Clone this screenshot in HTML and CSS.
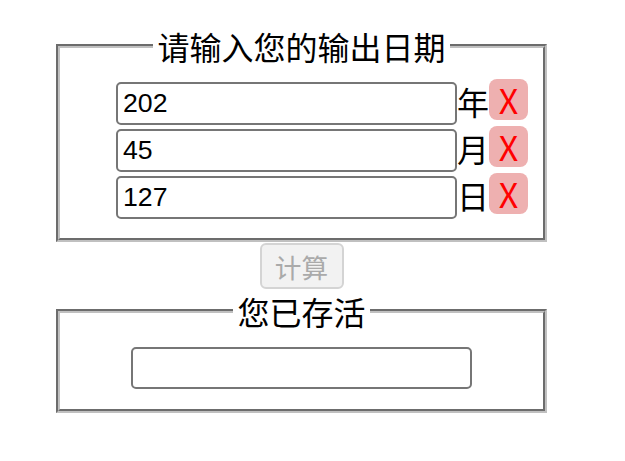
FILE: index.html
```html
<!DOCTYPE html>
<html lang="zh-CN">
<head>
  <meta charset="UTF-8">
  <title>日期计算</title>
  <link rel="stylesheet" href="styles.css">
</head>
<body>

<div class="page">
  <!-- 输入日期 -->
  <fieldset class="box date-box">
    <legend>请输入您的输出日期</legend>
    <div class="row">
      <input type="text" class="field" id="year" value="202">
      <span class="unit">年</span>
      <button class="clear-btn" data-for="year">X</button>
    </div>
    <div class="row">
      <input type="text" class="field" id="month" value="45">
      <span class="unit">月</span>
      <button class="clear-btn" data-for="month">X</button>
    </div>
    <div class="row">
      <input type="text" class="field" id="day" value="127">
      <span class="unit">日</span>
      <button class="clear-btn" data-for="day">X</button>
    </div>
  </fieldset>

  <button class="calc-btn" id="calc" disabled>计算</button>

  <!-- 结果 -->
  <fieldset class="box result-box">
    <legend>您已存活</legend>
    <input type="text" class="field result" id="result" readonly>
  </fieldset>
</div>

</body>
</html>
```

FILE: styles.css
```css
body {
  margin: 0;
  font-family: "Noto Sans CJK SC", sans-serif;
  font-size: 32px;
  color: #000;
  background: #fff;
}
.page {
  width: 491px;
  margin-left: 56px;
  padding-top: 26px;
  display: flex;
  flex-direction: column;
  align-items: center;
}
.box {
  box-sizing: border-box;
  width: 491px;
  margin: 0;
  border: 4px groove #c0c0c0;
  min-inline-size: 0;
}
.box legend {
  margin: 0 auto;
  padding: 0 4px;
  line-height: 40px;
}
.date-box {
  padding: 13px 0 18px;
}
.row {
  display: flex;
  align-items: flex-start;
  height: 47px;
  padding-left: 56px;
}
.field {
  box-sizing: border-box;
  width: 341px;
  height: 43px;
  margin: 0;
  padding: 0 5px;
  border: 2px solid #767676;
  border-radius: 5px;
  font-family: "Liberation Sans", Arial, sans-serif;
  font-size: 26.67px;
  color: #000;
  background: #fff;
}
.row .field {
  margin-top: 3px;
}
.unit {
  width: 32px;
  line-height: 46px;
  margin-top: -1px;
}
.clear-btn {
  width: 39px;
  height: 41px;
  padding: 0;
  border: none;
  border-radius: 8px;
  background-color: #eeb0b0;
  color: #ff0000;
  font-family: "Noto Sans CJK SC", sans-serif;
  font-size: 34px;
  line-height: 41px;
  cursor: pointer;
}
.calc-btn {
  box-sizing: border-box;
  width: 84px;
  height: 46px;
  margin-top: 1px;
  padding: 0;
  border: 2px solid #d4d4d4;
  border-radius: 6px;
  background-color: #f2f2f2;
  color: #aaaaaa;
  font-family: "Noto Sans CJK SC", sans-serif;
  font-size: 26.67px;
}
.result-box {
  margin-top: 2px;
  padding: 16px 0 20px;
}
.result-box .field {
  display: block;
  margin: 0 auto;
  height: 42px;
}
```
